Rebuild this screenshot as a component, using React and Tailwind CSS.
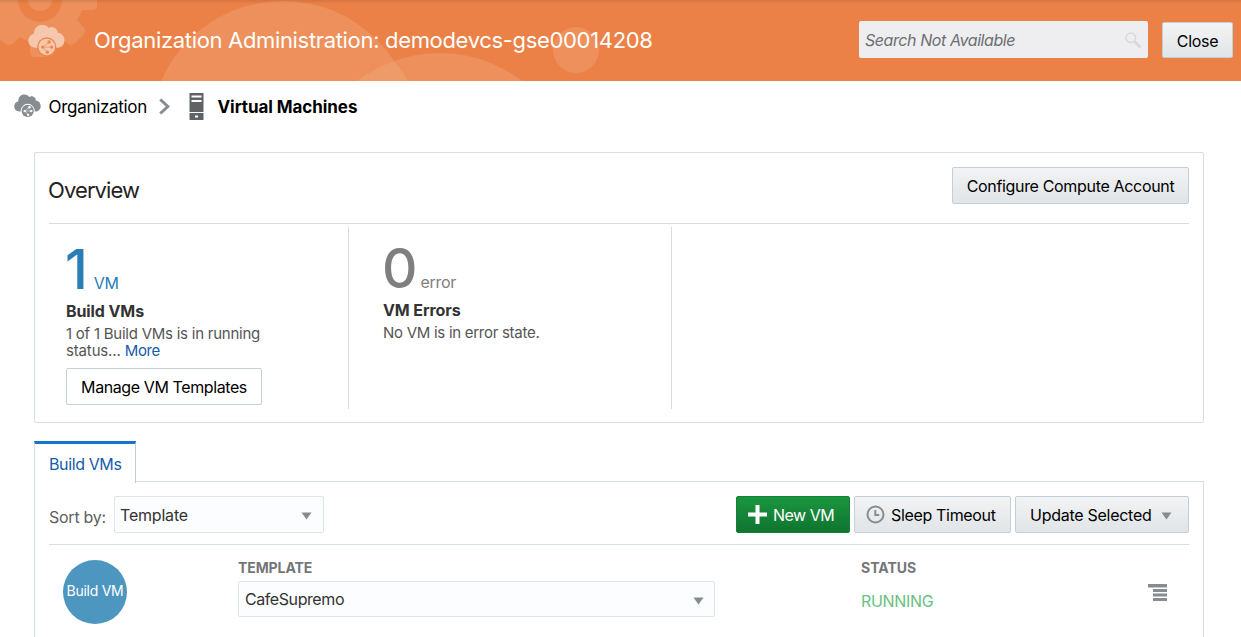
function Txt({ className = '', children }) {
  return <span className={'inline-block whitespace-nowrap ' + className}>{children}</span>;
}

const btn = 'flex items-center rounded-[2px] border border-[#c4ced7] text-black text-[16px] leading-none whitespace-nowrap';
const grey = ' bg-gradient-to-b from-[#f2f3f4] to-[#e1e5e8]';

function CloudIcon({ className, body, badge, ring }) {
  return (
    <svg className={className} viewBox="0 0 27 25">
      <path fill={body} d="M5.5 17.5C2 17.3.2 15 .2 12.400.2 9.700 2 7.700 4.300 7.200 4.200 3.200 7 .6 10.300.6c2 0 3.700.8 4.800 2.300 1-.6 2-.8 3-.6 2.200.3 3.600 2 3.700 4.100 2.900.4 4.900 2.600 4.900 5.500 0 3.300-2.300 5.600-5.600 5.600z" />
      <circle cx="13.700" cy="16.900" r="7.100" fill={ring} />
      <circle cx="13.700" cy="16.900" r="6.100" fill={badge} />
      <path d="M10.900 17 15.400 13.300M10.900 17l3.300 4M10.900 17h6.200" stroke={ring} strokeWidth=".5" />
      <circle cx="10.700" cy="17" r="1.200" fill={ring} />
      <circle cx="15.400" cy="13.300" r="1.300" fill={ring} />
      <circle cx="14.100" cy="20.700" r="1.200" fill={ring} />
      <circle cx="17.300" cy="17" r="1.200" fill={ring} />
    </svg>
  );
}

function Backdrop() {
  return (
    <svg className="absolute inset-0" width="1241" height="81" viewBox="0 0 1241 81">
      <g fill="#ed905b">
        <circle cx="283" cy="134" r="133" />
        <circle cx="440" cy="187" r="134" />
        <circle cx="576" cy="50" r="23" />
        <path fillRule="evenodd" d="M0 0H97V7Q96 10 92 10H82Q80 15 77 20L84 28Q86 31 84 34L74 44Q71 46 68 44L59 37Q54 40 49 42V52Q48 56 45 57H34Q30 56 30 52V42Q25 40 20 37L12 44Q9 46 6 44L0 40ZM18 0A22 22 0 1 0 62 0Z" />
        <path d="M28 0A12 11 0 0 0 52 0Z" />
      </g>
      <path fill="#ee9a69" d="M357 81A134 134 0 0 1 394.500 61A133 133 0 0 1 408 81Z" />
    </svg>
  );
}

function Caret({ className = '' }) {
  return <svg className={className} width="11" height="8" viewBox="0 0 11 8"><path fill="#878c90" d="M.5.500h10L5.500 7.500z" /></svg>;
}

export default function App() {
  return (
    <div className="w-[1241px] h-[637px] overflow-hidden bg-white font-['Inter',sans-serif] flex flex-col">
      <header className="relative h-[81px] shrink-0 bg-[#ec8147] overflow-hidden">
        <Backdrop />
        <div className="relative h-full flex items-start pr-2 pt-[21px]">
          <CloudIcon className="ml-7 mt-[3px] w-[37px] h-[34px]" body="#f6c7ad" badge="#f6c7ad" ring="#ec8750" />
          <h1 className="ml-[29px] text-[22px] leading-[38px] text-white"><Txt className="tracking-[-0.33px]">Organization Administration: demodevcs-gse00014208</Txt></h1>
          <div className="ml-auto w-[289px] h-[37px] rounded-[2px] bg-[#eeeef0] flex items-center justify-between pl-1.5 pr-1.5">
            <Txt className="text-[16px] italic text-[#6c6e70] tracking-[-0.42px]">Search Not Available</Txt>
            <svg className="mt-0.5" width="17" height="17" viewBox="0 0 17 17" fill="none" stroke="#d7d8da"><circle cx="5.800" cy="5.800" r="4.800" strokeWidth="1.500" /><path d="m9.500 9.500 6 6" strokeWidth="2.800" /></svg>
          </div>
          <div className={btn + grey + ' ml-3.5 mt-px h-9 w-[71px] justify-center pt-0.5'}><Txt className="tracking-[-0.3px]">Close</Txt></div>
        </div>
        <div className="absolute inset-x-0 top-0 h-1 bg-gradient-to-b from-[#00000018] to-transparent" />
      </header>

      <nav className="h-[71px] shrink-0 flex items-start pt-[13px] pl-3.5 text-[17px] leading-[26px] text-black">
        <CloudIcon className="w-[27px] h-[25px]" body="#878c90" badge="#878c90" ring="#ffffff" />
        <Txt className="ml-[7.5px] tracking-[-0.3px]">Organization</Txt>
        <svg className="ml-3 mt-1" width="12" height="17" viewBox="0 0 12 17" fill="none" stroke="#878c90" strokeWidth="3"><path d="m1.300 1.500 7.500 7-7.500 7" /></svg>
        <svg className="ml-[18px] -mt-px" width="15" height="28" viewBox="0 0 15 28"><path fill="#606365" d="M.5 0h14v19H.5zM.5 20h14v7H.5z" /><path fill="#fff" d="M2.500 2.500h10v2h-10zM2.500 7h10v2h-10zM6 22.500h3v2H6z" /></svg>
        <Txt className="ml-[13.5px] font-bold tracking-[-0.07px]">Virtual Machines</Txt>
      </nav>

      <section className="ml-[34px] w-[1170px] h-[271px] shrink-0 border border-[#d6dfe6] rounded-[2px] px-3.5">
        <div className="h-[71px] flex items-start justify-between border-b border-[#d6dbe0]">
          <h2 className="-ml-px mt-[21px] text-[22px] leading-8 text-[#222]"><Txt className="tracking-[-0.9px]">Overview</Txt></h2>
          <div className={btn + grey + ' mt-3.5 h-[37px] w-[237px] justify-center'}><Txt className="tracking-[-0.33px]">Configure Compute Account</Txt></div>
        </div>
        <div className="mt-[3px] flex h-[182px]">
          <div className="w-[300px] border-r border-[#d6dbe0] pl-[17px] pt-3">
            <div className="flex items-baseline h-[62px] text-[#2b7db5]"><Txt className="-ml-px text-[55px] leading-[60px] font-medium">1</Txt><Txt className="ml-1.5 text-[16px] tracking-[-0.4px]">VM</Txt></div>
            <div className="text-[16px] leading-5 font-bold text-[#333]"><Txt className="tracking-[-0.1px]">Build VMs</Txt></div>
            <div className="mt-1 text-[15px] leading-[17px] text-[#555]"><Txt className="tracking-[-0.24px]">1 of 1 Build VMs is in running</Txt><br /><Txt className="tracking-[-0.15px]">status...</Txt> <Txt className="text-[#145bab] tracking-[-0.4px]">More</Txt></div>
            <div className={btn + ' mt-[9px] h-[37px] w-[196px] justify-center'}><Txt className="tracking-[-0.4px]">Manage VM Templates</Txt></div>
          </div>
          <div className="w-[323px] border-r border-[#d6dbe0] pl-[34px] pt-[11px]">
            <div className="flex items-baseline h-[62px] text-[#7f7f7f]"><Txt className="-ml-px text-[55px] leading-[60px] font-medium">0</Txt><Txt className="ml-[3px] text-[16px] tracking-[-0.3px]">error</Txt></div>
            <div className="text-[16px] leading-5 font-bold text-[#333]"><Txt className="tracking-[-0.1px]">VM Errors</Txt></div>
            <div className="mt-1 text-[15px] leading-[17px] text-[#555]"><Txt className="tracking-[-0.28px]">No VM is in error state.</Txt></div>
          </div>
        </div>
      </section>

      <div className="mt-[18px] ml-[34px] w-[1170px] shrink-0 flex">
        <div className="w-[102px] h-[42px] -mb-px border-t-[3px] border-t-[#1574cd] border-l border-l-[#d6dfe6] border-r border-r-[#c4ced7] pl-3.5 text-[16px] leading-[40px] text-[#145bab]"><Txt className="tracking-[-0.38px]">Build VMs</Txt></div>
        <div className="mt-10 flex-1 border-t border-r border-[#d6dfe6] rounded-tr-[3px]" />
      </div>
      <section className="ml-[34px] w-[1170px] flex-1 border-x border-[#d6dfe6] px-3.5">
        <div className="h-[63px] pt-3.5 flex items-start border-b border-[#d6dfe6] text-[16px]">
          <div className="w-[65px] mt-[11px] leading-5 text-[#5c5f61]"><Txt className="tracking-[-0.25px]">Sort by:</Txt></div>
          <div className="h-[37px] w-[210px] flex items-center justify-between rounded-[2px] border border-[#dfe4e7] bg-[#fcfdfe] pl-1.5 pr-[11px] text-[#333]"><Txt className="-ml-px tracking-[-0.2px]">Template</Txt><Caret className="mt-[3px]" /></div>
          <div className="ml-auto flex gap-1">
            <div className="h-[37px] w-[114px] flex items-center rounded-[2px] border border-[#128036] bg-gradient-to-b from-[#1a963f] to-[#107530] pl-[11px] text-white"><svg width="19" height="19" viewBox="0 0 19 19"><path fill="#fff" d="M7.500 0h4v7.500H19v4h-7.500V19h-4v-7.500H0v-4h7.500z" /></svg><Txt className="ml-1.5 tracking-[-0.5px]">New VM</Txt></div>
            <div className={btn + grey + ' h-[37px] w-[157px] pl-[11px]'}><svg width="19" height="19" viewBox="0 0 19 19" fill="none" stroke="#878c90" strokeWidth="2"><circle cx="9.500" cy="9.500" r="8" /><path d="M9.300 5v5h4" /></svg><Txt className="ml-1.5 tracking-[-0.33px]">Sleep Timeout</Txt></div>
            <div className={btn + grey + ' h-[37px] w-[174px] pl-3.5'}><Txt className="tracking-[-0.27px]">Update Selected</Txt><Caret className="ml-2.5 mt-[3px]" /></div>
          </div>
        </div>
        <div className="flex items-start">
          <div className="ml-3.5 mt-[15px] pb-[3px] size-16 rounded-full bg-[#4d96c0] flex items-center justify-center text-[14px] text-white"><Txt className="tracking-[-0.25px]">Build VM</Txt></div>
          <div className="ml-[111px] mt-[13px] w-[477px]">
            <div className="text-[14px] leading-5 font-bold text-[#737679]"><Txt className="tracking-[-0.1px]">TEMPLATE</Txt></div>
            <div className="mt-[3px] h-9 flex items-center justify-between rounded-[2px] border border-[#dfe4e7] bg-[#fcfdfe] pl-1.5 pr-2.5 text-[16px] text-[#333]"><Txt className="tracking-[-0.42px]">CafeSupremo</Txt><Caret className="mt-[3px]" /></div>
          </div>
          <div className="ml-[146px] mt-[13px]">
            <div className="text-[14px] leading-5 font-bold text-[#737679]"><Txt>STATUS</Txt></div>
            <div className="mt-[13px] text-[16px] leading-5 text-[#68c182]"><Txt className="tracking-[-0.3px]">RUNNING</Txt></div>
          </div>
          <svg className="ml-auto mr-[22px] mt-[39px]" width="19" height="18" viewBox="0 0 19 18" fill="#878c90"><path d="M0 0h19v3.500H0zM5 5h14v3H5zM5 9.500h14v3H5zM5 14h14v3H5z" /></svg>
        </div>
      </section>
    </div>
  );
}
